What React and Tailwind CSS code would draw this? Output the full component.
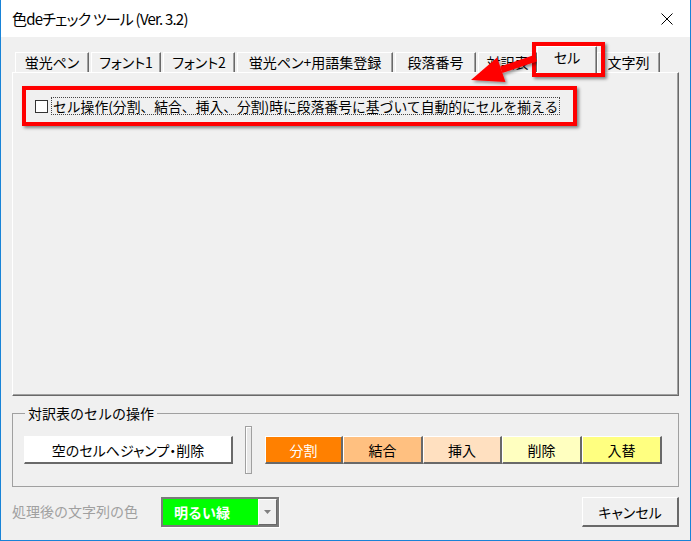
import React from "react";

const tabs = [
  { label: "蛍光ペン", w: 74 },
  { label: "フォント1", w: 70 },
  { label: "フォント2", w: 72 },
  { label: "蛍光ペン+用語集登録", w: 156 },
  { label: "段落番号", w: 81 },
  { label: "対訳表", w: 59 },
  { label: "セル", w: 60, active: true },
  { label: "文字列", w: 63 },
];

const cellButtons = [
  { label: "分割", w: 78, cls: "bg-[#ff8000] text-white" },
  { label: "結合", w: 80, cls: "bg-[#ffc080] text-black" },
  { label: "挿入", w: 79, cls: "bg-[#ffe0c0] text-black" },
  { label: "削除", w: 80, cls: "bg-[#ffffc0] text-black" },
  { label: "入替", w: 80, cls: "bg-[#ffff80] text-black" },
];

function Tab({ label, w, active }) {
  if (active) {
    return (
      <div
        style={{ width: w }}
        className="relative z-10 -mx-[2px] -mb-[1px] flex h-[27px] items-start justify-center border-l border-t border-white bg-[#f0f0f0] pt-[1px] shadow-[inset_-1px_0_0_#a0a0a0] border-r border-r-[#696969] [font-feature-settings:'palt']"
      >
        {label}
      </div>
    );
  }
  return (
    <div
      style={{ width: w }}
      className="flex h-[20px] items-center justify-center border-l border-t border-white border-r border-r-[#696969] pb-[1px] shadow-[inset_-1px_0_0_#a0a0a0] [font-feature-settings:'palt']"
    >
      {label}
    </div>
  );
}

function RaisedButton({ children, className, w }) {
  return (
    <div
      style={{ width: w }}
      className={
        "flex h-[28px] items-center justify-center border-l border-t border-white border-r-2 border-b-2 border-r-[#696969] border-b-[#696969] [font-feature-settings:'palt'] " +
        className
      }
    >
      {children}
    </div>
  );
}

export default function App() {
  return (
    <div className="flex h-[541px] w-[691px] flex-col border-x border-b border-[#1883d7] font-['Noto_Sans_CJK_JP','Noto_Sans',sans-serif] text-[14px] leading-[18px] text-black">
      {/* title bar */}
      <div className="flex h-[37px] items-center justify-between bg-white pl-[11px] pr-[17px]">
        <span className="text-[15px] tracking-[-0.8px] [font-feature-settings:'palt']">色deチェック ツール (Ver. 3.2)</span>
        <svg width="12" height="12" viewBox="0 0 12 12">
          <path d="M0.5 0.5 L11.5 11.5 M11.5 0.5 L0.5 11.5" stroke="#000" strokeWidth="1" />
        </svg>
      </div>

      <div className="relative flex flex-1 flex-col bg-[#f0f0f0] px-[11px]">
        {/* tabs */}
        <div className="flex h-[35px] items-end gap-[2px] pl-[3px]">
          {tabs.map((t) => (
            <Tab key={t.label} {...t} />
          ))}
        </div>

        {/* tab page */}
        <div className="h-[324px] border-l border-t border-white border-r border-b border-r-[#696969] border-b-[#696969] shadow-[inset_-1px_-1px_0_#a0a0a0]">
          <div className="ml-[9px] mt-[13px] flex h-[40px] w-[555px] items-center border-4 border-[#ff0000] pl-[9px] shadow-[2px_2px_3px_rgba(0,0,0,0.45)]">
            <div className="h-[13px] w-[13px] border border-[#333] bg-white" />
            <span className="ml-[3px] border border-dotted border-[#444] px-[1px] text-[13.8px] leading-[16px]">
              セル操作(分割、結合、挿入、分割)時に段落番号に基づいて自動的にセルを揃える
            </span>
          </div>
        </div>

        {/* group box */}
        <fieldset className="mt-[8px] h-[83px] border border-[#a0a0a0]">
          <legend className="ml-[12px] px-[3px]">対訳表のセルの操作</legend>
          <div className="mt-[4px] flex h-[48px] items-center pl-[11px]">
            <RaisedButton w={209} className="bg-white">
              空のセルへジャンプ・削除
            </RaisedButton>
            <div className="ml-[12px] h-[48px] w-[7px] border border-[#a0a0a0] bg-[#e8e8e8] shadow-[inset_1px_1px_0_white]" />
            <div className="ml-[13px] flex">
              {cellButtons.map((b) => (
                <RaisedButton key={b.label} w={b.w} className={b.cls}>
                  {b.label}
                </RaisedButton>
              ))}
            </div>
          </div>
        </fieldset>

        {/* bottom row */}
        <div className="mt-[10px] flex h-[30px] items-center">
          <span className="w-[149px] pb-[2px] text-[#a0a0a0]">処理後の文字列の色</span>
          <div className="flex h-[30px] w-[118px] border-2 border-[#7a7a7a] shadow-[1px_1px_0_white]">
            <div className="flex flex-1 items-center bg-[#00ff00] pl-[11px] font-bold text-white">
              明るい緑
            </div>
            <div className="flex w-[19px] items-center justify-center border-l border-t border-white border-r border-b border-r-[#696969] border-b-[#696969] bg-[#f0f0f0]">
              <svg width="7" height="4" viewBox="0 0 7 4">
                <path d="M0 0 H7 L3.5 4 Z" fill="#808080" />
              </svg>
            </div>
          </div>
          <div className="ml-auto flex h-[30px] w-[97px] items-center justify-center border-l border-t border-white border-r-2 border-b-2 border-r-[#696969] border-b-[#696969] [font-feature-settings:'palt']">
            キャンセル
          </div>
        </div>

        {/* annotation: red box on the active tab */}
        <div className="absolute left-[531px] top-[5px] h-[35px] w-[73px] border-4 border-[#ff0000] shadow-[2px_2px_3px_rgba(0,0,0,0.45)]" />

        {/* annotation: arrow */}
        <svg className="absolute left-[459px] top-[13px]" width="90" height="45" viewBox="460 50 90 45">
          <defs>
            <filter id="sh" x="-20%" y="-20%" width="150%" height="160%">
              <feDropShadow dx="2" dy="2" stdDeviation="1.5" floodColor="#000" floodOpacity="0.4" />
            </filter>
          </defs>
          <g filter="url(#sh)" fill="#ff0000">
            <path d="M534.9 54.7 L537.1 61.3 L502.4 73 L500.2 66.4 Z" />
            <path d="M471 80 L497.1 57.4 L505.5 82 Z" />
          </g>
        </svg>
      </div>
    </div>
  );
}
